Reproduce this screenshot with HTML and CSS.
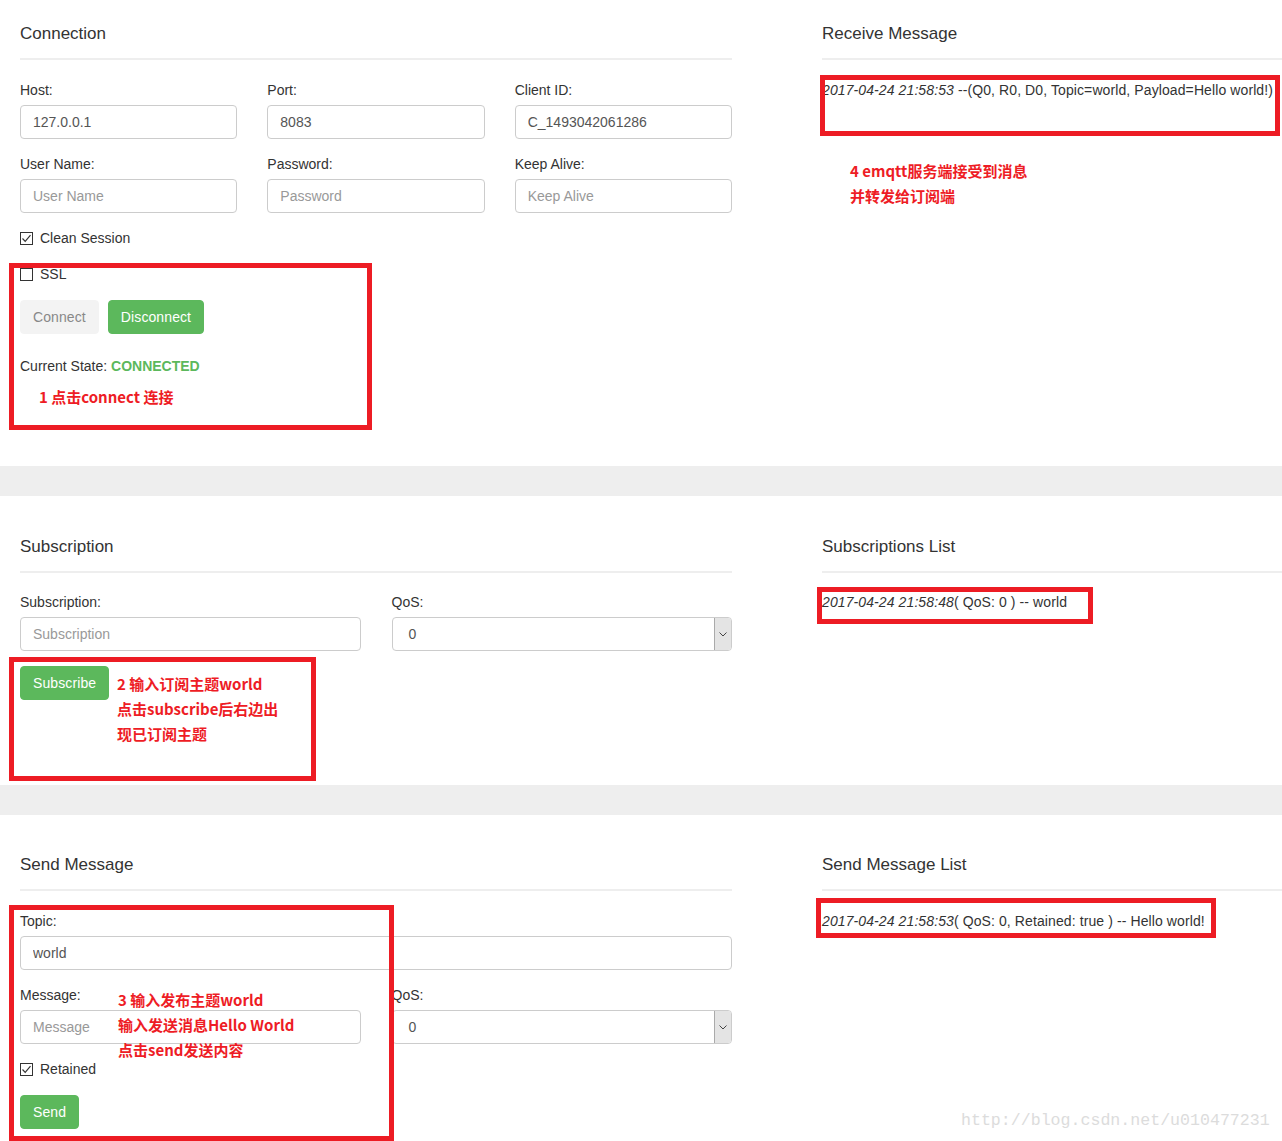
FILE: index.html
```html
<!DOCTYPE html>
<html lang="zh-CN">
<head>
<meta charset="utf-8">
<title>MQTT Websocket Client</title>
<link rel="stylesheet" href="styles.css">
</head>
<body>
<section class="panel panel-first">
  <div class="col-left">
    <h4 class="page-header">Connection</h4>
    <div class="row row3">
      <div class="form-group"><label>Host:</label><input class="form-control" type="text" value="127.0.0.1"></div>
      <div class="form-group"><label>Port:</label><input class="form-control" type="text" value="8083"></div>
      <div class="form-group"><label>Client ID:</label><input class="form-control" type="text" value="C_1493042061286"></div>
    </div>
    <div class="row row3">
      <div class="form-group"><label>User Name:</label><input class="form-control" type="text" placeholder="User Name"></div>
      <div class="form-group"><label>Password:</label><input class="form-control" type="text" placeholder="Password"></div>
      <div class="form-group"><label>Keep Alive:</label><input class="form-control" type="text" placeholder="Keep Alive"></div>
    </div>
    <div class="checkbox"><span class="cb"><svg viewBox="0 0 13 13" width="13" height="13"><rect x="0.5" y="0.5" width="12" height="12" fill="#fff" stroke="#333"/><polyline points="2.5,6.5 5.2,9.3 10.5,3.2" fill="none" stroke="#333" stroke-width="1.2"/></svg></span>Clean Session</div>
    <div class="checkbox"><span class="cb"><svg viewBox="0 0 13 13" width="13" height="13"><rect x="0.5" y="0.5" width="12" height="12" fill="#fff" stroke="#333"/></svg></span>SSL</div>
    <div class="btns">
      <button class="btn btn-disabled">Connect</button>
      <button class="btn btn-success">Disconnect</button>
    </div>
    <p class="state">Current State: <strong class="connected">CONNECTED</strong></p>
  </div>
  <div class="col-right">
    <h4 class="page-header">Receive Message</h4>
    <p class="msg"><em>2017-04-24 21:58:53</em> --(Q0, R0, D0, Topic=world, Payload=Hello world!)</p>
  </div>
  <div class="mark mark-conn"></div>
  <div class="mark mark-recv"></div>
  <p class="note note-1">1 点击connect 连接</p>
  <p class="note note-4">4 emqtt服务端接受到消息<br>并转发给订阅端</p>
</section>
<div class="band"></div>
<section class="panel panel-sub">
  <div class="col-left">
    <h4 class="page-header">Subscription</h4>
    <div class="row row2">
      <div class="form-group"><label>Subscription:</label><input class="form-control" type="text" placeholder="Subscription"></div>
      <div class="form-group"><label>QoS:</label>
        <div class="select"><span class="select-val">0</span><span class="select-arrow"><svg viewBox="0 0 8 5" width="8" height="5"><polyline points="0.5,0.5 4,4 7.5,0.5" fill="none" stroke="#444" stroke-width="1"/></svg></span></div>
      </div>
    </div>
    <div class="btns">
      <button class="btn btn-success">Subscribe</button>
    </div>
  </div>
  <div class="col-right">
    <h4 class="page-header">Subscriptions List</h4>
    <p class="msg"><em>2017-04-24 21:58:48</em>( QoS: 0 ) -- world</p>
  </div>
  <div class="mark mark-sub"></div>
  <div class="mark mark-sublist"></div>
  <p class="note note-2">2 输入订阅主题world<br>点击subscribe后右边出<br>现已订阅主题</p>
</section>
<div class="band"></div>
<section class="panel panel-send">
  <div class="col-left">
    <h4 class="page-header">Send Message</h4>
    <div class="row row1">
      <div class="form-group"><label>Topic:</label><input class="form-control" type="text" value="world"></div>
    </div>
    <div class="row row2">
      <div class="form-group"><label>Message:</label><input class="form-control" type="text" placeholder="Message"></div>
      <div class="form-group"><label>QoS:</label>
        <div class="select"><span class="select-val">0</span><span class="select-arrow"><svg viewBox="0 0 8 5" width="8" height="5"><polyline points="0.5,0.5 4,4 7.5,0.5" fill="none" stroke="#444" stroke-width="1"/></svg></span></div>
      </div>
    </div>
    <div class="checkbox"><span class="cb"><svg viewBox="0 0 13 13" width="13" height="13"><rect x="0.5" y="0.5" width="12" height="12" fill="#fff" stroke="#333"/><polyline points="2.5,6.5 5.2,9.3 10.5,3.2" fill="none" stroke="#333" stroke-width="1.2"/></svg></span>Retained</div>
    <div class="btns">
      <button class="btn btn-success">Send</button>
    </div>
  </div>
  <div class="col-right">
    <h4 class="page-header">Send Message List</h4>
    <p class="msg"><em>2017-04-24 21:58:53</em>( QoS: 0, Retained: true ) -- Hello world!</p>
  </div>
  <div class="mark mark-send"></div>
  <div class="mark mark-sendlist"></div>
  <p class="note note-3">3 输入发布主题world<br>输入发送消息Hello World<br>点击send发送内容</p>
  <p class="watermark">http://blog.csdn.net/u010477231</p>
</section>
</body>
</html>
```
FILE: styles.css
```css
html, body {
  margin: 0;
  padding: 0;
  background: #fff;
}
body {
  font-family: "Liberation Sans", Arial, sans-serif;
  font-size: 14px;
  line-height: 20px;
  color: #333;
  overflow: hidden;
  width: 1282px;
}
.panel {
  position: relative;
  display: grid;
  grid-template-columns: 712px 1fr;
  column-gap: 90px;
  padding-left: 20px;
  box-sizing: border-box;
  width: 1282px;
}
.panel-first { height: 466px; }
.panel-sub { height: 289px; padding-top: 17px; }
.panel-send { height: 326px; padding-top: 16px; }
.band {
  height: 30px;
  background: #eee;
}
.page-header {
  margin: 23px 0 0;
  font-size: 17px;
  line-height: 20px;
  font-weight: normal;
  padding-top: 1px;
  padding-bottom: 14px;
  border-bottom: 2px solid #eee;
  color: #333;
}
.row {
  display: grid;
  column-gap: 30px;
}
.row3 { grid-template-columns: repeat(3, 1fr); }
.row2 { grid-template-columns: repeat(2, 1fr); column-gap: 31px; }
.row1 { grid-template-columns: 1fr; }
.col-left > .row:first-of-type { margin-top: 20px; }
.panel-sub .col-left > .row:first-of-type { margin-top: 19px; }
.form-group {
  margin-bottom: 15px;
  min-width: 0;
}
.form-group label {
  display: block;
  margin-bottom: 5px;
  line-height: 20px;
  font-weight: normal;
}
.form-control {
  display: block;
  width: 100%;
  height: 34px;
  box-sizing: border-box;
  padding: 6px 12px;
  font-family: "Liberation Sans", Arial, sans-serif;
  font-size: 14px;
  color: #555;
  background: #fff;
  border: 1px solid #ccc;
  border-radius: 4px;
  margin: 0;
  outline: none;
}
.form-control::placeholder { color: #999; }
.select {
  display: flex;
  align-items: stretch;
  height: 34px;
  box-sizing: border-box;
  border: 1px solid #ccc;
  border-radius: 4px;
  background: #fff;
  color: #555;
}
.select-val {
  flex: 1;
  padding-left: 16px;
  line-height: 32px;
}
.select-arrow {
  width: 16px;
  display: flex;
  align-items: center;
  justify-content: center;
  background: #e4e4e4;
  border-left: 1px solid #aaa;
  border-radius: 0 3px 3px 0;
}
.checkbox {
  display: flex;
  align-items: center;
  height: 20px;
  margin-bottom: 16px;
}
.cb {
  display: inline-flex;
  width: 13px;
  height: 13px;
  margin-right: 7px;
}
.btns {
  display: flex;
  gap: 9px;
}
.btn {
  height: 34px;
  padding: 6px 12px;
  font-family: "Liberation Sans", Arial, sans-serif;
  font-size: 14px;
  line-height: 20px;
  border-radius: 4px;
  border: 1px solid transparent;
  box-sizing: border-box;
  letter-spacing: 0.1px;
}
.btn-disabled {
  background: #f3f3f3;
  border-color: #f3f3f3;
  color: #888;
}
.btn-success {
  background: #5cb85c;
  border-color: #5cb85c;
  color: #fff;
}
.state {
  margin: 22px 0 0;
}
.connected {
  color: #5cb85c;
  font-weight: bold;
}
.msg {
  margin: 20px 0 0;
  white-space: nowrap;
  letter-spacing: 0.1px;
}
.panel-sub .msg { margin-top: 19px; }
.msg em { font-style: italic; }

.mark {
  position: absolute;
  border: 5px solid #ed1c24;
  box-sizing: border-box;
  pointer-events: none;
}
.mark-conn { left: 9px; top: 263px; width: 363px; height: 167px; }
.mark-recv { left: 820px; top: 75px; width: 460px; height: 61px; }
.mark-sub { left: 9px; top: 161px; width: 307px; height: 124px; }
.mark-sublist { left: 817px; top: 91px; width: 276px; height: 37px; }
.mark-send { left: 9px; top: 90px; width: 385px; height: 236px; }
.mark-sendlist { left: 816px; top: 83px; width: 400px; height: 40px; }

.note {
  position: absolute;
  margin: 0;
  font-family: "Noto Sans CJK SC", "Liberation Sans", sans-serif;
  font-weight: bold;
  font-size: 15px;
  line-height: 25px;
  color: #ee1c25;
  white-space: nowrap;
}
.note-1 { left: 39px; top: 384px; }
.note-4 { left: 850px; top: 158px; }
.note-2 { left: 117px; top: 175px; }
.note-3 { left: 118px; top: 172px; }

.watermark {
  position: absolute;
  margin: 0;
  left: 961px;
  top: 295px;
  font-family: "Liberation Mono", monospace;
  font-size: 16.6px;
  line-height: 22px;
  color: #dcdcdc;
}
```
